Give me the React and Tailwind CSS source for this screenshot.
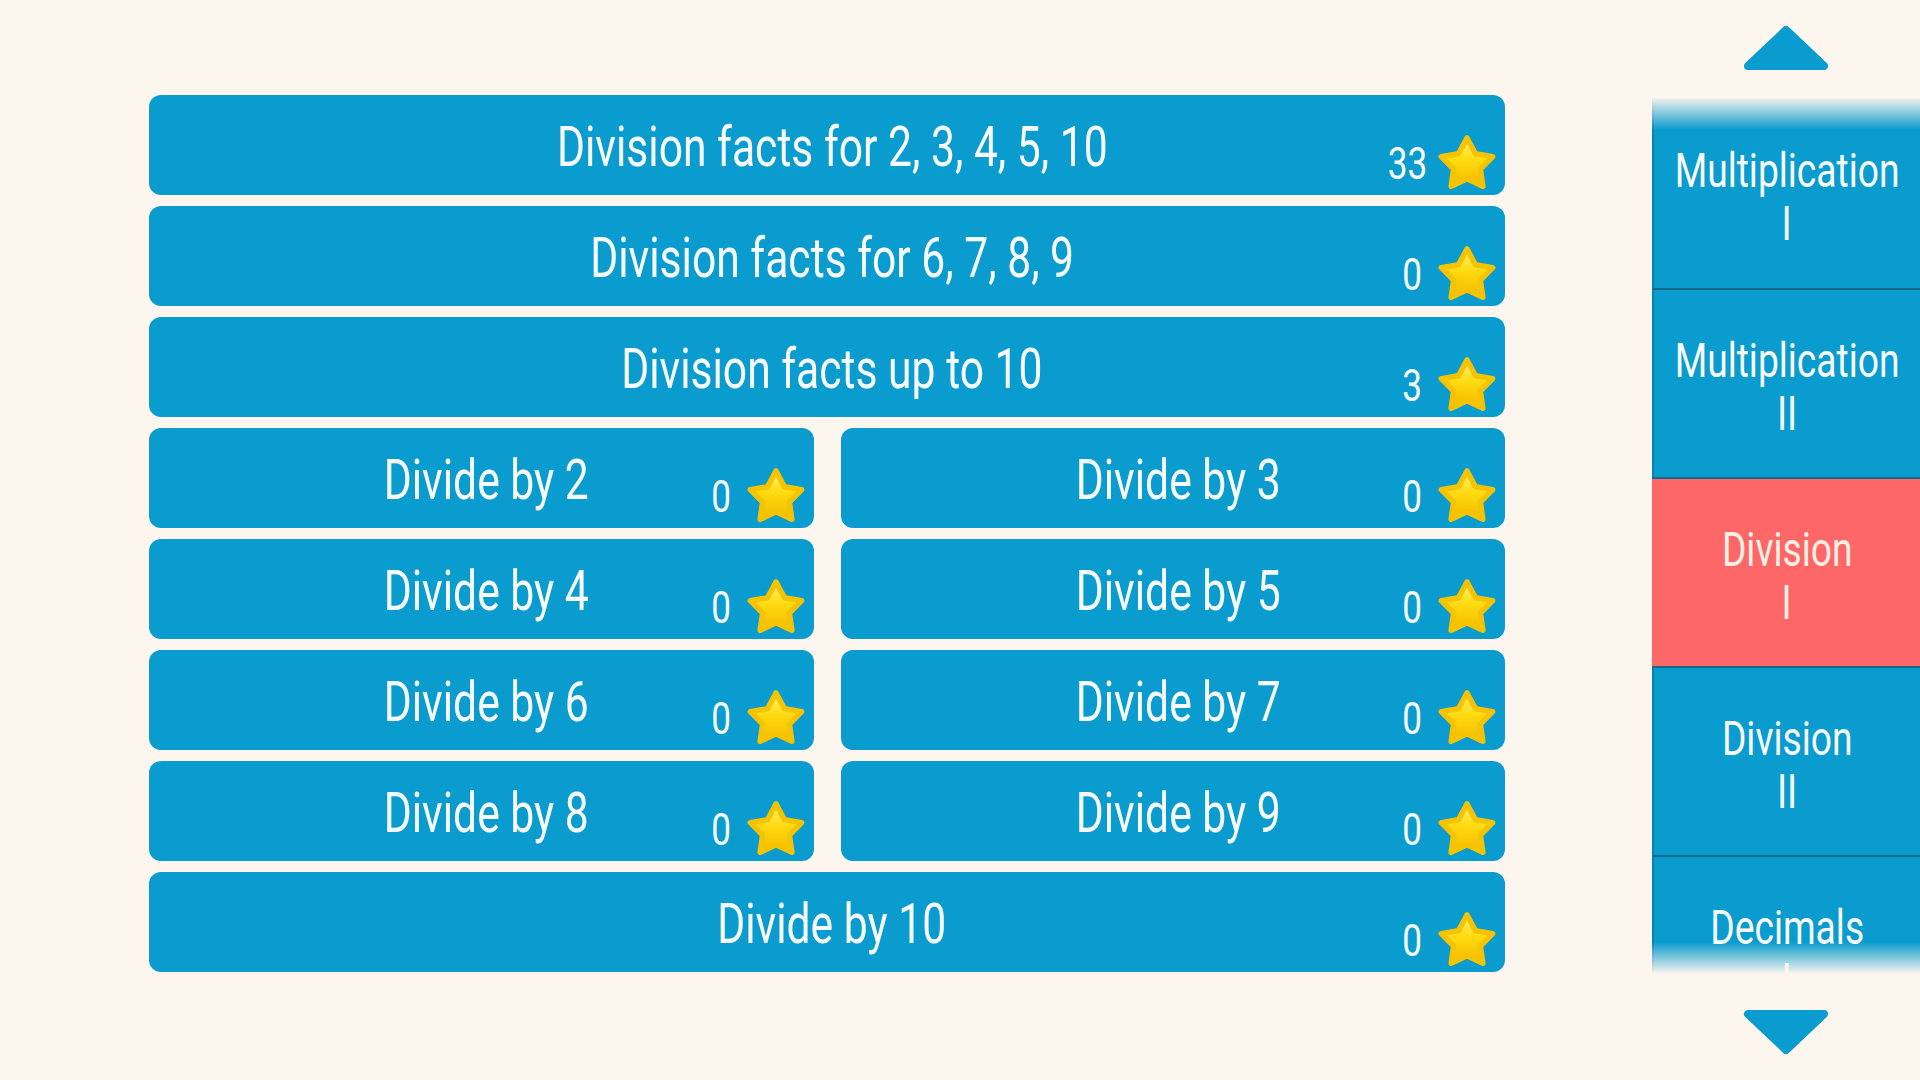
import { Fragment } from 'react'

const FONT = 'font-["Roboto",sans-serif]'

const rows = [
  [{ label: 'Division facts for 2, 3, 4, 5, 10', stars: 33 }],
  [{ label: 'Division facts for 6, 7, 8, 9', stars: 0 }],
  [{ label: 'Division facts up to 10', stars: 3 }],
  [{ label: 'Divide by 2', stars: 0 }, { label: 'Divide by 3', stars: 0 }],
  [{ label: 'Divide by 4', stars: 0 }, { label: 'Divide by 5', stars: 0 }],
  [{ label: 'Divide by 6', stars: 0 }, { label: 'Divide by 7', stars: 0 }],
  [{ label: 'Divide by 8', stars: 0 }, { label: 'Divide by 9', stars: 0 }],
  [{ label: 'Divide by 10', stars: 0 }],
]

const topics = [
  { name: 'Multiplication', level: 'I' },
  { name: 'Multiplication', level: 'II' },
  { name: 'Division', level: 'I', active: true },
  { name: 'Division', level: 'II' },
  { name: 'Decimals', level: 'I' },
]

function Star() {
  return (
    <svg width="60" height="56" viewBox="0 0 60 56">
      <defs>
        <linearGradient id="starFill" x1="0" y1="0" x2="0" y2="1">
          <stop offset="0" stopColor="#fff27a" />
          <stop offset="0.45" stopColor="#ffdb10" />
          <stop offset="1" stopColor="#f3b800" />
        </linearGradient>
      </defs>
      <polygon
        points="30,4 38.5,19.8 55.68,22.66 43.4,35.1 45.87,52.34 30,44.8 14.13,52.34 16.6,35.1 4.32,22.66 21.5,19.8"
        fill="url(#starFill)"
        stroke="#f6c300"
        strokeWidth="5.5"
        strokeLinejoin="round"
      />
    </svg>
  )
}

function Arrow({ down }) {
  return (
    <svg width="86" height="48" viewBox="0 0 86 48" className={down ? 'rotate-180' : ''}>
      <polygon points="43,6 81,42 5,42" fill="#0a9bcf" stroke="#0a9bcf" strokeWidth="8" strokeLinejoin="round" />
    </svg>
  )
}

function LessonButton({ label, stars }) {
  return (
    <div className="relative flex-1 h-[100px] rounded-[12px] bg-[#0a9bcf] flex items-center justify-center pl-[10px] pt-[5px]">
      <span className="inline-block scale-x-[0.775] whitespace-nowrap text-[55px] leading-none text-[#f8fbfd]">
        {label}
      </span>
      <div className="absolute right-[8px] bottom-[5px] flex items-center">
        <span className="inline-block w-[44px] text-right scale-x-[0.78] origin-right text-[45px] leading-none text-[#f8fbfd] pt-[2px]">
          {stars}
        </span>
        <span className="ml-[15px]">
          <Star />
        </span>
      </div>
    </div>
  )
}

export default function App() {
  return (
    <div className={`flex h-screen overflow-hidden bg-[#fdf6ee] ${FONT}`}>
      <main className="w-[1652px] shrink-0 pl-[149px] pr-[147px] pt-[95px]">
        <div className="flex flex-col gap-[11px]">
          {rows.map((row, i) => (
            <div key={i} className="flex gap-[27px]">
              {row.map(item => (
                <LessonButton key={item.label} {...item} />
              ))}
            </div>
          ))}
        </div>
      </main>

      <aside className="w-[268px] shrink-0 flex flex-col items-center">
        <div className="mt-[24px] h-[48px]">
          <Arrow />
        </div>

        <div className="relative mt-[26px] h-[882px] w-full overflow-hidden bg-[#0a9bcf] shadow-[inset_2px_0_0_#0b82ad]">
          {topics.map((t, i) => (
            <div
              key={i}
              className={`flex flex-col items-center justify-center pt-[7px] pl-[2px] border-b-2 border-[#17698a] ${i === 0 ? 'h-[192px]' : 'h-[189px]'} ${t.active ? 'bg-[#fe6767] text-[#fdf1e6]' : 'text-[#f8fbfd]'}`}
            >
              <span className="inline-block scale-x-[0.775] whitespace-nowrap text-[48px] leading-[53px]">{t.name}</span>
              <span className="inline-block scale-x-[0.775] text-[48px] leading-[53px]">{t.level}</span>
            </div>
          ))}
          <div className="absolute top-0 left-0 right-0 h-[32px] bg-gradient-to-b from-[#fdf6ee]/95 to-[#0a9bcf]/0" />
          <div className="absolute bottom-0 left-0 right-0 h-[38px] bg-gradient-to-t from-[#fdf6ee] from-15% to-[#0a9bcf]/0" />
        </div>

        <div className="mt-[28px] h-[48px]">
          <Arrow down />
        </div>
      </aside>
    </div>
  )
}
